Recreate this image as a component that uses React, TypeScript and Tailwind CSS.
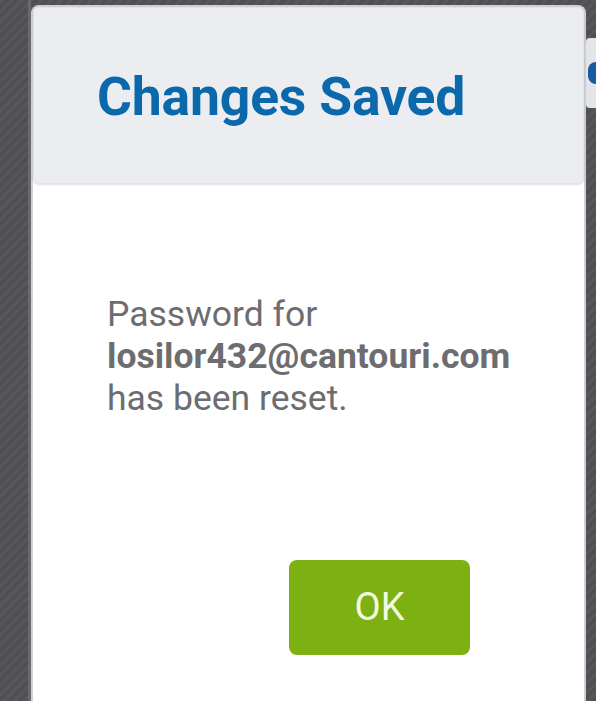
export default function App() {
  return (
    <div
      className="flex h-[701px] w-[596px] overflow-hidden bg-[#505054]"
      style={{
        backgroundImage:
          "repeating-linear-gradient(135deg, rgba(255,255,255,0.04) 0px, rgba(255,255,255,0.04) 3px, transparent 3px, transparent 7px)",
      }}
    >
      {/* left strip */}
      <div className="flex w-[31px] shrink-0 justify-end">
        <div className="w-[3px] bg-[#6a6a6e]" />
      </div>

      {/* dialog */}
      <div className="mt-[5px] flex h-[720px] w-[555px] shrink-0 flex-col rounded-t-lg border-2 border-b-0 border-[#cfd0d4] bg-white font-['Roboto',sans-serif]">
        <div className="flex h-[177px] items-center rounded-md border border-[#e2e4e8] bg-[#ebedf1] pl-[63px] pt-[2px] shadow-[0_1px_2px_rgba(0,0,0,0.12)]">
          <h1 className="text-[53.5px] font-bold leading-none tracking-[-0.2px] text-[#0b68ab]">Changes Saved</h1>
        </div>

        <div className="pl-[74px] pt-[109px] text-[35.5px] leading-[42px] text-[#6d6d70]">
          <p>Password for</p>
          <p className="font-bold">losilor432@cantouri.com</p>
          <p>has been reset.</p>
        </div>

        <div className="flex pl-[256px] pt-[141px]">
          <button className="flex h-[95px] w-[181px] items-center justify-center rounded-lg bg-[#7db012] text-[38px] text-[#f3fae2]">
            OK
          </button>
        </div>
      </div>

      {/* right strip */}
      <div className="flex w-[10px] shrink-0 flex-col">
        <div className="mt-[38px] flex h-[70px] items-center rounded-l-sm bg-[#e4e5e8] pl-[2px]">
          <div className="h-[22px] w-[10px] rounded-l-full bg-[#1a5aa0]" />
        </div>
      </div>
    </div>
  );
}
